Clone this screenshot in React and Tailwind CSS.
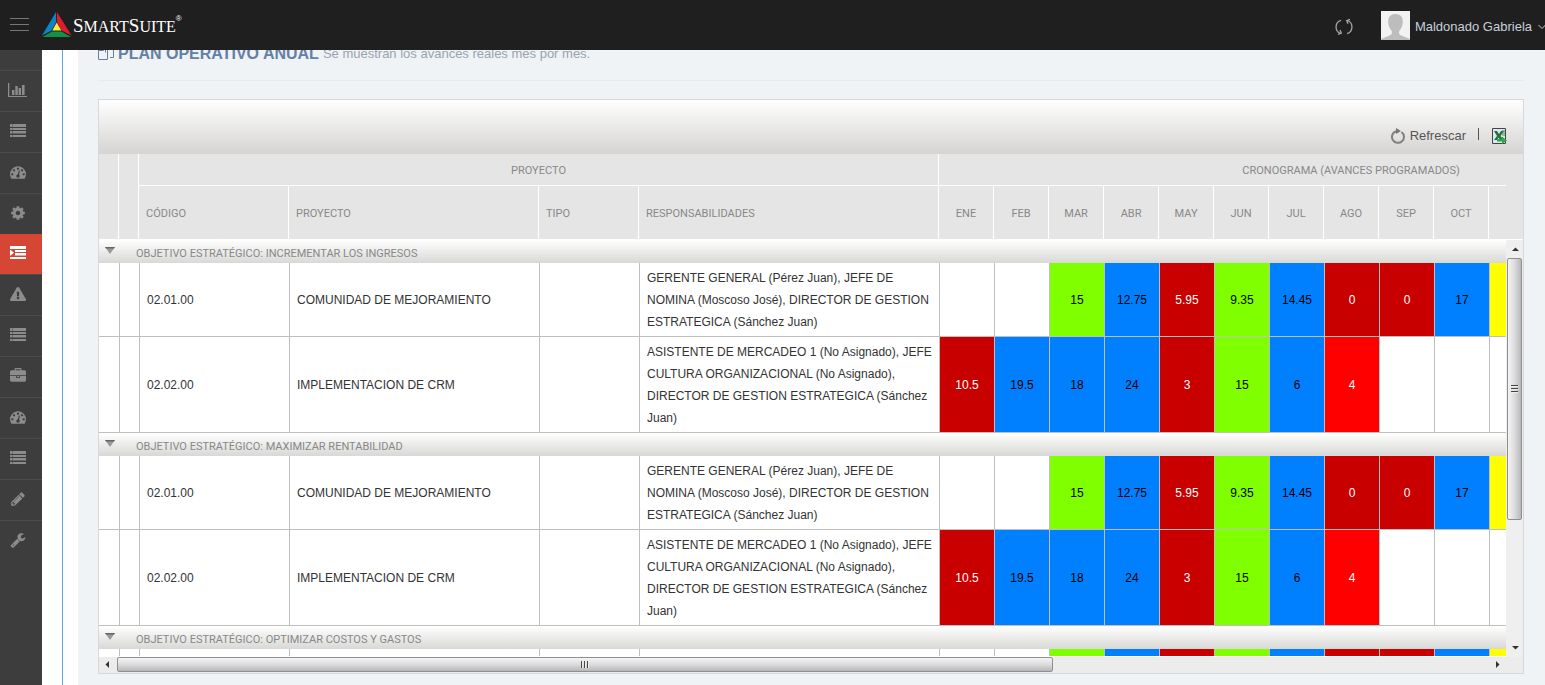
import React from 'react';
import { FaExclamationTriangle } from 'react-icons/fa';

const MONTHS = ['ENE', 'FEB', 'MAR', 'ABR', 'MAY', 'JUN', 'JUL', 'AGO', 'SEP', 'OCT'];

const COLORS = {
  red: 'bg-[#c80000] text-white',
  bright: 'bg-[#ff0000] text-white',
  green: 'bg-[#80ff00] text-black',
  blue: 'bg-[#0080ff] text-black',
  yellow: 'bg-[#ffff00] text-black',
};

const COMMUNITY = {
  code: '02.01.00',
  name: 'COMUNIDAD DE MEJORAMIENTO',
  owners: ['GERENTE GENERAL (Pérez Juan), JEFE DE', 'NOMINA (Moscoso José), DIRECTOR DE GESTION', 'ESTRATEGICA (Sánchez Juan)'],
  values: [
    null, null, ['15', 'green'], ['12.75', 'blue'], ['5.95', 'red'], ['9.35', 'green'],
    ['14.45', 'blue'], ['0', 'red'], ['0', 'red'], ['17', 'blue'], ['', 'yellow'],
  ],
};

const CRM = {
  code: '02.02.00',
  name: 'IMPLEMENTACION DE CRM',
  owners: ['ASISTENTE DE MERCADEO 1 (No Asignado), JEFE', 'CULTURA ORGANIZACIONAL (No Asignado),', 'DIRECTOR DE GESTION ESTRATEGICA (Sánchez', 'Juan)'],
  values: [
    ['10.5', 'red'], ['19.5', 'blue'], ['18', 'blue'], ['24', 'blue'], ['3', 'red'], ['15', 'green'],
    ['6', 'blue'], ['4', 'bright'], null, null, null,
  ],
};

const GROUPS = [
  { name: 'INCREMENTAR LOS INGRESOS', projects: [COMMUNITY, CRM] },
  { name: 'MAXIMIZAR RENTABILIDAD', projects: [COMMUNITY, CRM] },
  { name: 'OPTIMIZAR COSTOS Y GASTOS', projects: [COMMUNITY] },
];

const Glyph = ({ d, size = 16 }) => (
  <svg viewBox="0 0 1792 1792" width={size} height={size} fill="currentColor" aria-hidden="true">
    <path d={d} />
  </svg>
);

const PENCIL = 'M491 1536l91-91-235-235-91 91v107h128v128h107zm523-928q0-22-22-22-10 0-17 7l-542 542q-7 7-7 17 0 22 22 22 10 0 17-7l542-542q7-7 7-17zm-54-192l416 416-832 832h-416v-416zm683 96q0 53-37 90l-166 166-416-416 166-165q36-38 90-38 53 0 91 38l235 234q37 39 37 91z';
const WRENCH = 'M448 1472q0-26-19-45t-45-19-45 19-19 45 19 45 45 19 45-19 19-45zm644-420l-682 682q-37 37-90 37-52 0-91-37l-106-108q-38-36-38-90 0-53 38-91l681-681q39 98 114.500 173.500t173.500 114.500zm634-435q0 39-23 106-47 134-164.500 217.500t-258.500 83.500q-185 0-316.500-131.500t-131.500-316.500 131.500-316.500 316.500-131.500q58 0 121.500 16.500t107.500 46.500q16 11 16 28t-16 28l-293 169v224l193 107q5-3 79-48.500t135.500-81 70.500-35.500q15 0 23.500 10t8.500 25z';
const GAUGE = 'M384 1152q0-53-37.500-90.500t-90.500-37.500-90.500 37.500-37.500 90.500 37.500 90.500 90.500 37.500 90.500-37.500 37.500-90.500zm192-448q0-53-37.500-90.500t-90.500-37.500-90.500 37.500-37.500 90.500 37.500 90.500 90.500 37.500 90.500-37.500 37.500-90.500zm428 481l101-382q6-26-7.500-48.500t-38.500-29.500-48 6.500-30 39.500l-101 382q-60 5-107 43.500t-63 98.500q-20 77 20 146t117 89 146-20 89-117q16-60-6-117t-72-91zm660-33q0-53-37.500-90.500t-90.500-37.500-90.500 37.500-37.500 90.500 37.500 90.500 90.500 37.500 90.500-37.500 37.500-90.500zm-640-640q0-53-37.500-90.500t-90.500-37.500-90.500 37.500-37.500 90.500 37.500 90.500 90.500 37.500 90.500-37.500 37.500-90.500zm448 192q0-53-37.500-90.500t-90.500-37.500-90.500 37.500-37.500 90.500 37.500 90.500 90.500 37.500 90.500-37.500 37.500-90.500zm320 448q0 261-141 483-19 29-54 29h-1402q-35 0-54-29-141-221-141-483 0-182 71-348t191-286 286-191 348-71 348 71 286 191 191 286 71 348z';
const COG = 'M1152 896q0-106-75-181t-181-75-181 75-75 181 75 181 181 75 181-75 75-181zm512-109v222q0 12-8 23t-20 13l-185 28q-19 54-39 91 35 50 107 138 10 12 10 25t-9 23q-27 37-99 108t-94 71q-12 0-26-9l-138-108q-44 23-91 38-16 136-29 186-7 28-36 28h-222q-14 0-24.500-8.500t-11.500-21.500l-28-184q-49-16-90-37l-141 107q-10 9-25 9-14 0-25-11-126-114-165-168-7-10-7-23 0-12 8-23 15-21 51-66.500t54-70.500q-27-50-41-99l-183-27q-13-2-21-12.500t-8-23.500v-222q0-12 8-23t19-13l186-28q14-46 39-92-40-57-107-138-10-12-10-24 0-10 9-23 26-36 98.500-107.500t94.500-71.500q13 0 26 10l138 107q44-23 91-38 16-136 29-186 7-28 36-28h222q14 0 24.500 8.500t11.500 21.500l28 184q49 16 90 37l142-107q9-9 24-9 13 0 25 10 129 119 165 170 7 8 7 22 0 12-8 23-15 21-51 66.500t-54 70.500q26 50 41 98l183 28q13 2 21 12.500t8 23.500z';
const BRIEFCASE = 'M640 256h512v-128h-512v128zm1152 640v480q0 66-47 113t-113 47h-1472q-66 0-113-47t-47-113v-480h672v160q0 26 19 45t45 19h320q26 0 45-19t19-45v-160h672zm-768 0v128h-256v-128h256zm768-480v384h-1792v-384q0-66 47-113t113-47h352v-160q0-40 28-68t68-28h576q40 0 68 28t28 68v160h352q66 0 113 47t47 113z';

const ChartIcon = () => (
  <svg width="20" height="14" viewBox="0 0 20 14" fill="currentColor" aria-hidden="true">
    <path d="M0 0h1.300v13h17.700v1H0zM4 7h2.400v5H4zM7.300 3h2.400v9H7.300zM10.600 5h2.400v7h-2.400zM14 2h2.600v10H14z" />
  </svg>
);

const ListIcon = () => (
  <svg width="16" height="14" viewBox="0 0 16 14" fill="currentColor" aria-hidden="true">
    <path d="M0 0h2.600v3H0zM3 0h13v3H3zM0 4h2.600v2H0zM3 4h13v2H3zM0 7h2.600v2.500H0zM3 7h13v2.500H3zM0 11h2.600v2H0zM3 11h13v2H3z" />
  </svg>
);

const IndentIcon = () => (
  <svg width="16" height="14" viewBox="0 0 16 14" fill="currentColor" aria-hidden="true">
    <path d="M0 0h16v3H0zM5 4h11v2H5zM5 7h11v2.500H5zM0 11h16v2H0zM0 3.500l4 3.200-4 3.200z" />
  </svg>
);

const MENU = [
  { label: 'Gráficos', icon: <ChartIcon /> },
  { label: 'Indicadores', icon: <ListIcon /> },
  { label: 'Tablero', icon: <Glyph d={GAUGE} /> },
  { label: 'Configuración', icon: <Glyph d={COG} /> },
  { label: 'Plan operativo', icon: <IndentIcon />, active: true },
  { label: 'Alertas', icon: <FaExclamationTriangle size={16} /> },
  { label: 'Listado', icon: <ListIcon /> },
  { label: 'Portafolio', icon: <Glyph d={BRIEFCASE} /> },
  { label: 'Rendimiento', icon: <Glyph d={GAUGE} /> },
  { label: 'Reportes', icon: <ListIcon /> },
  { label: 'Editar', icon: <Glyph d={PENCIL} /> },
  { label: 'Herramientas', icon: <Glyph d={WRENCH} /> },
];

const Logo = () => (
  <a href="#" className="ml-[13px] flex items-center text-white" aria-label="SmartSuite">
    <svg width="30" height="26" viewBox="0 0 30 26" className="mr-px" aria-hidden="true">
      <path d="M14 0L0 23.500L9.500 18.500L14.200 10z" fill="#0d84c8" />
      <path d="M15 0L29.500 23.500L19.500 18.500L15 10z" fill="#e01b2c" />
      <path d="M0.500 25L10 19.500h9.500L29 25z" fill="#0f9347" />
      <path d="M14.700 10.500L19.300 18.500H10.200z" fill="#f8ec3c" />
    </svg>
    <span className="pt-[3px] font-['Liberation_Serif',serif] text-[16px] leading-6">
      <span className="text-[19px]">S</span>MART<span className="text-[19px]">S</span>UITE
    </span>
    <span className="mb-3 text-[8px] leading-none">®</span>
  </a>
);

const TopBar = () => (
  <header className="relative z-10 flex h-[50px] shrink-0 items-center bg-[#1f1f1f] pl-[10px]">
    <button type="button" aria-label="Menú" className="flex flex-col gap-[5px] pb-px">
      <span className="h-px w-[19px] bg-[#777]" />
      <span className="h-px w-[19px] bg-[#777]" />
      <span className="h-px w-[19px] bg-[#777]" />
    </button>
    <Logo />
    <div className="ml-auto flex items-center pt-px text-[#c6cfda]">
      <button type="button" aria-label="Actualizar" className="mt-[3px] mr-7">
        <svg width="18" height="18" viewBox="0 0 18 18" fill="none" stroke="#a5a5a5" strokeWidth="1.300" aria-hidden="true">
          <path d="M6 2.300A7 7 0 0 0 5.500 15.500M3 16.500l3.300-1.300-1.300-3.200M12 15.700A7 7 0 0 0 12.500 2.500M15 1.300l-3.300 1.300 1.300 3.200" />
        </svg>
      </button>
      <svg width="29" height="29" viewBox="0 0 29 29" className="mr-[5px]" aria-hidden="true">
        <path d="M0 0h29v29H0z" fill="#f2f2f2" />
        <path d="M14.500 3C9.500 3 7 6 7.200 11c.1 4 1.800 7 3.600 9 .5 3-.3 4-3.300 5L0 28v1h29v-1l-7.500-3c-3-1-3.800-2-3.300-5 1.800-2 3.500-5 3.600-9C22 6 19.500 3 14.500 3z" fill="#bdbdbd" />
      </svg>
      <button type="button" className="flex items-center gap-[6px] pt-[2px] text-[13px] leading-5">
        Maldonado Gabriela
        <svg width="7" height="6" viewBox="0 0 7 6" fill="none" stroke="currentColor" aria-hidden="true">
          <path d="M0.500 1L4 4.500L7.500 1" />
        </svg>
      </button>
    </div>
  </header>
);

const SideBar = () => (
  <nav className="w-[42px] shrink-0 bg-[#3d3d3d] pt-5">
    <ul>
      {MENU.map((item) => (
        <li key={item.label} className={item.active ? '' : 'border-t border-[#4b4b4b]'}>
          <a
            href="#"
            aria-label={item.label}
            className={`flex h-10 items-center justify-center pr-[6px] pb-[2px] ${item.active ? 'bg-[#d64635] text-white' : 'text-[#8c8c8c]'}`}
          >
            {item.icon}
          </a>
        </li>
      ))}
    </ul>
  </nav>
);

const Toolbar = () => (
  <div className="flex h-[54px] shrink-0 items-end justify-end bg-linear-to-b from-white to-[#d5d4d2] pr-4 pb-2 text-[13px] text-[#555]">
    <button type="button" className="flex items-center gap-1 leading-5">
      <svg width="16" height="16" viewBox="0 0 16 16" fill="none" aria-hidden="true">
        <path d="M11.500 4A6 6 0 1 1 6 3.200" stroke="#808080" strokeWidth="2" />
        <path d="M6 0l5 3-5 3z" fill="#777" />
      </svg>
      Refrescar
    </button>
    <span className="mx-3 mb-[6px] h-3 w-px bg-[#555]" />
    <button type="button" aria-label="Exportar a Excel" className="mb-[2px]">
      <svg width="16" height="16" viewBox="0 0 16 16" aria-hidden="true">
        <path d="M1.500 0.500h13v15h-13z" fill="#d8e8f4" stroke="#444" />
        <path d="M3 3h3l2 3 2-3h3L9.500 8l3 4H9L7.500 9.500 6 12H3l3-4z" fill="#2c6e3a" />
        <path d="M6 11h5V8.500l5 4-5 3.500v-2.500H6z" fill="#2fa84a" />
        <path d="M11 3h3M11 5h3M11 7h3" stroke="#4a8a55" />
      </svg>
    </button>
  </div>
);

const Columns = ({ first }) => (
  <colgroup>
    <col className={first} />
    <col className="w-5" />
    <col className="w-[150px]" />
    <col className="w-[250px]" />
    <col className="w-[100px]" />
    <col className="w-[300px]" />
    <col span={15} className="w-[55px]" />
  </colgroup>
);

const headCell = 'border-r border-white px-[7px] pt-1 font-normal';

const GridHead = () => (
  <div className="shrink-0 border-b border-white bg-[#e5e5e5] pr-[17px]">
    <div className="overflow-hidden">
      <table className="w-[1665px] table-fixed border-separate border-spacing-0 font-[Roboto,sans-serif] text-[11px] text-[#888]">
        <Columns first="w-5" />
        <thead>
          <tr className="h-8">
            <th rowSpan={2} className="border-r border-white" />
            <th rowSpan={2} className="border-r border-white" />
            <th colSpan={4} className={`${headCell} border-b`}>PROYECTO</th>
            <th colSpan={15} className={`${headCell} border-b`}>CRONOGRAMA (AVANCES PROGRAMADOS)</th>
          </tr>
          <tr className="h-[53px] text-left">
            <th className={headCell}>CÓDIGO</th>
            <th className={headCell}>PROYECTO</th>
            <th className={headCell}>TIPO</th>
            <th className={headCell}>RESPONSABILIDADES</th>
            {MONTHS.map((m) => (
              <th key={m} className={`${headCell} text-center`}>{m}</th>
            ))}
            <th colSpan={5} />
          </tr>
        </thead>
      </table>
    </div>
  </div>
);

const bodyCell = 'border-r border-b border-[#bfbfbf] px-[7px]';

const GroupRow = ({ name }) => (
  <tr>
    <td colSpan={21} className="p-0">
      <div className="flex h-[23px] items-center bg-linear-to-b from-white to-[#d8d8d6] pl-[6px] font-[Roboto,sans-serif] text-[11px] text-[#888]">
        <button type="button" aria-label="Contraer" className="mr-[21px] mb-[2px]">
          <svg width="10" height="7" viewBox="0 0 10 7" aria-hidden="true">
            <path d="M0 0h10L5 7z" fill="#999" />
            <path d="M0 0h10L9 1.500H1z" fill="#666" />
          </svg>
        </button>
        <span className="pt-1">OBJETIVO ESTRATÉGICO: {name}</span>
      </div>
    </td>
  </tr>
);

const ProjectRow = ({ project }) => (
  <tr>
    <td className={bodyCell} />
    <td className={bodyCell} />
    <td className={bodyCell}>{project.code}</td>
    <td className={bodyCell}>{project.name}</td>
    <td className={bodyCell} />
    <td className={`${bodyCell} pt-1 pb-[3px] whitespace-nowrap`}>
      {project.owners.map((line) => (
        <div key={line}>{line}</div>
      ))}
    </td>
    {project.values.map((v, i) => (
      <td key={i} className={`border-r border-b border-[#bfbfbf] text-center ${v ? COLORS[v[1]] : ''}`}>
        {v ? v[0] : ''}
      </td>
    ))}
    <td colSpan={4} className="border-b border-[#bfbfbf]" />
  </tr>
);

const GridBody = () => (
  <div className="min-h-0 flex-1 overflow-hidden border-b border-white">
    <table className="w-[1666px] table-fixed border-separate border-spacing-0 text-[12px] leading-[22px] text-[#333]">
      <Columns first="w-[21px]" />
      <tbody>
        {GROUPS.map((group) => (
          <React.Fragment key={group.name}>
            <GroupRow name={group.name} />
            {group.projects.map((p) => (
              <ProjectRow key={p.code} project={p} />
            ))}
          </React.Fragment>
        ))}
      </tbody>
    </table>
  </div>
);

const Arrow = ({ d }) => (
  <svg width="7" height="7" viewBox="0 0 7 7" className="shrink-0" fill="#333" aria-hidden="true">
    <path d={d} />
  </svg>
);

const VerticalScroll = () => (
  <div className="flex w-[17px] shrink-0 flex-col items-center bg-[#efefef] py-[6px] pl-px">
    <Arrow d="M0 5h7L3.500 1.500z" />
    <div className="mt-[5px] mb-[6px] flex min-h-0 w-full flex-1 flex-col">
      <div className="flex h-[69%] w-[15px] flex-col items-center justify-center gap-px rounded-[2px] border border-[#8f8f8f] bg-linear-to-r from-[#f4f4f4] via-[#dcdcde] to-[#b8b8bb]">
        <span className="h-[2px] w-[7px] border-t border-[#444] bg-[#eee]" />
        <span className="h-[2px] w-[7px] border-t border-[#444] bg-[#eee]" />
        <span className="h-[2px] w-[7px] border-t border-[#444] bg-[#eee]" />
      </div>
    </div>
    <Arrow d="M0 2h7L3.500 5.500z" />
  </div>
);

const HorizontalScroll = () => (
  <div className="flex h-4 shrink-0 items-center bg-[#ececec] pr-[22px] pb-px pl-[5px]">
    <Arrow d="M5 0v7L1.500 3.500z" />
    <div className="ml-[6px] min-w-0 flex-1">
      <div className="flex h-[15px] w-[68%] items-center justify-center gap-px rounded-[2px] border border-[#8f8f8f] bg-linear-to-b from-[#f4f4f4] via-[#dcdcde] to-[#b8b8bb]">
        <span className="h-[7px] w-[2px] border-l border-[#444] bg-[#eee]" />
        <span className="h-[7px] w-[2px] border-l border-[#444] bg-[#eee]" />
        <span className="h-[7px] w-[2px] border-l border-[#444] bg-[#eee]" />
      </div>
    </div>
    <Arrow d="M2 0v7L5.500 3.500z" />
  </div>
);

export default function App() {
  return (
    <div className="flex h-screen flex-col overflow-hidden bg-white font-['Liberation_Sans',Arial,sans-serif]">
      <TopBar />
      <div className="flex min-h-0 flex-1">
        <SideBar />
        <div className="ml-5 w-4 shrink-0 border-l border-[#5aa9e6]" />
        <main className="flex min-w-0 flex-1 flex-col bg-[#eff3f6] pr-[21px] pb-[11px] pl-5">
          {/* El título queda parcialmente debajo de la barra superior */}
          <div className="-mt-2 flex items-center gap-1 border-b border-[#eaeaea] pb-[14px] leading-6">
            <h1 className="flex items-center gap-1 text-[16px] font-bold text-[#6480a5]">
              <svg width="16" height="18" viewBox="0 0 16 18" fill="none" stroke="#6480a5" aria-hidden="true">
                <path d="M5.500 1.500h4v13h-9v-9zM5.500 1.500v4h-5M7.500 3.500v4M10 0.500h5.500v12H12" />
              </svg>
              PLAN OPERATIVO ANUAL
            </h1>
            <span className="text-[13px] text-[#9aa3ad]">Se muestran los avances reales mes por mes.</span>
          </div>
          <section className="mt-[18px] flex min-h-0 flex-1 flex-col border border-[#d8d8d8] bg-white">
            <Toolbar />
            <GridHead />
            <div className="flex min-h-0 flex-1">
              <div className="flex min-w-0 flex-1 flex-col">
                <GridBody />
              </div>
              <VerticalScroll />
            </div>
            <HorizontalScroll />
          </section>
        </main>
      </div>
    </div>
  );
}
